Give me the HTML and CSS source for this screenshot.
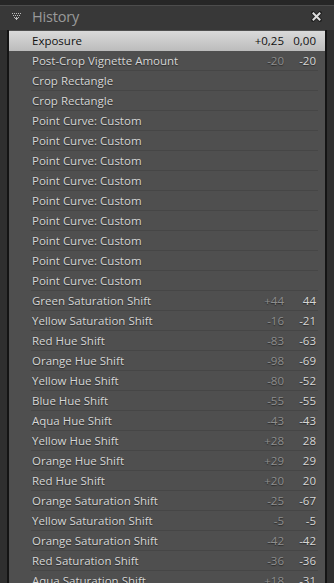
FILE: index.html
```html
<!DOCTYPE html>
<html lang="en">
<head>
  <meta charset="UTF-8">
  <title>History</title>
  <link rel="stylesheet" href="styles.css">
</head>
<body>
  <div class="topbar"></div>

  <!-- panel header -->
  <div class="panel-head">
    <svg class="toggle" width="9" height="7" viewBox="0 0 9 7">
      <g fill="#bdbdbd">
        <rect x="0" y="0" width="1" height="1"/><rect x="2" y="0" width="1" height="1"/>
        <rect x="4" y="0" width="1" height="1"/><rect x="6" y="0" width="1" height="1"/>
        <rect x="8" y="0" width="1" height="1"/>
        <rect x="1" y="2" width="1" height="1"/><rect x="3" y="2" width="1" height="1"/>
        <rect x="5" y="2" width="1" height="1"/><rect x="7" y="2" width="1" height="1"/>
        <rect x="2" y="4" width="1" height="1"/><rect x="4" y="4" width="1" height="1"/>
        <rect x="6" y="4" width="1" height="1"/>
        <rect x="3" y="5" width="3" height="1"/>
        <rect x="4" y="6" width="1" height="1"/>
      </g>
    </svg>
    <span class="title">History</span>
    <svg class="close" width="11" height="11" viewBox="0 0 11 11">
      <path d="M2 2 L9 9 M9 2 L2 9" stroke="#222" stroke-width="4" stroke-linecap="square"/>
      <path d="M2.5 2.5 L8.5 8.5 M8.5 2.5 L2.5 8.5" stroke="#dcdcdc" stroke-width="2" stroke-linecap="square"/>
    </svg>
  </div>

  <div class="list">
    <div class="row selected"><div class="cell"><span class="name">Exposure</span><span class="v1">+0,25</span><span class="v2">0,00</span></div></div>
    <div class="row"><div class="cell"><span class="name">Post-Crop Vignette Amount</span><span class="v1">-20</span><span class="v2">-20</span></div></div>
    <div class="row"><div class="cell"><span class="name">Crop Rectangle</span></div></div>
    <div class="row"><div class="cell"><span class="name">Crop Rectangle</span></div></div>
    <div class="row"><div class="cell"><span class="name">Point Curve: Custom</span></div></div>
    <div class="row"><div class="cell"><span class="name">Point Curve: Custom</span></div></div>
    <div class="row"><div class="cell"><span class="name">Point Curve: Custom</span></div></div>
    <div class="row"><div class="cell"><span class="name">Point Curve: Custom</span></div></div>
    <div class="row"><div class="cell"><span class="name">Point Curve: Custom</span></div></div>
    <div class="row"><div class="cell"><span class="name">Point Curve: Custom</span></div></div>
    <div class="row"><div class="cell"><span class="name">Point Curve: Custom</span></div></div>
    <div class="row"><div class="cell"><span class="name">Point Curve: Custom</span></div></div>
    <div class="row"><div class="cell"><span class="name">Point Curve: Custom</span></div></div>
    <div class="row"><div class="cell"><span class="name">Green Saturation Shift</span><span class="v1">+44</span><span class="v2">44</span></div></div>
    <div class="row"><div class="cell"><span class="name">Yellow Saturation Shift</span><span class="v1">-16</span><span class="v2">-21</span></div></div>
    <div class="row"><div class="cell"><span class="name">Red Hue Shift</span><span class="v1">-83</span><span class="v2">-63</span></div></div>
    <div class="row"><div class="cell"><span class="name">Orange Hue Shift</span><span class="v1">-98</span><span class="v2">-69</span></div></div>
    <div class="row"><div class="cell"><span class="name">Yellow Hue Shift</span><span class="v1">-80</span><span class="v2">-52</span></div></div>
    <div class="row"><div class="cell"><span class="name">Blue Hue Shift</span><span class="v1">-55</span><span class="v2">-55</span></div></div>
    <div class="row"><div class="cell"><span class="name">Aqua Hue Shift</span><span class="v1">-43</span><span class="v2">-43</span></div></div>
    <div class="row"><div class="cell"><span class="name">Yellow Hue Shift</span><span class="v1">+28</span><span class="v2">28</span></div></div>
    <div class="row"><div class="cell"><span class="name">Orange Hue Shift</span><span class="v1">+29</span><span class="v2">29</span></div></div>
    <div class="row"><div class="cell"><span class="name">Red Hue Shift</span><span class="v1">+20</span><span class="v2">20</span></div></div>
    <div class="row"><div class="cell"><span class="name">Orange Saturation Shift</span><span class="v1">-25</span><span class="v2">-67</span></div></div>
    <div class="row"><div class="cell"><span class="name">Yellow Saturation Shift</span><span class="v1">-5</span><span class="v2">-5</span></div></div>
    <div class="row"><div class="cell"><span class="name">Orange Saturation Shift</span><span class="v1">-42</span><span class="v2">-42</span></div></div>
    <div class="row"><div class="cell"><span class="name">Red Saturation Shift</span><span class="v1">-36</span><span class="v2">-36</span></div></div>
    <div class="row"><div class="cell"><span class="name">Aqua Saturation Shift</span><span class="v1">+18</span><span class="v2">-31</span></div></div>
  </div>
</body>
</html>
```

FILE: styles.css
```css
body {
  margin: 0;
  background: #2f2f2f;
  font-family: "Open Sans", "DejaVu Sans", sans-serif;
  overflow: hidden;
  height: 583px;
}

.topbar {
  height: 5px;
  background: #262626;
  border-bottom: 1px solid #4c4c4c;
}

.panel-head {
  display: flex;
  align-items: center;
  height: 20px;
  padding: 0 12px 4px 12px;
  background: #383838;
}

.toggle { margin-right: 11px; }

.title {
  flex: 1;
  color: #9a9a9a;
  font-size: 14.5px;
  letter-spacing: -0.2px;
}

.list {
  margin: 0 7px;
  border-left: 2px solid #141414;
  border-right: 2px solid #141414;
  background: #4f4f4f;
  padding-top: 1px;
}

.row {
  height: 20px;
  padding: 0 7px 0 22px;
}

.cell {
  display: flex;
  align-items: center;
  height: 19px;
  border-bottom: 1px solid #464646;
  font-size: 11.5px;
  color: #d6d6d6;
  text-shadow: 0 1px 1px #2a2a2a;
}

.name { flex: 1; padding-left: 1px; }

.v1 {
  width: 40px;
  text-align: right;
  color: #8e8e8e;
}

.v2 {
  width: 32px;
  text-align: right;
  padding-right: 2px;
}

.row.selected {
  background: linear-gradient(#dadada, #bcbcbc);
}

.row.selected .cell {
  border-bottom-color: transparent;
  color: #111;
  text-shadow: none;
}

.row.selected .v1 { color: #111; }
```
